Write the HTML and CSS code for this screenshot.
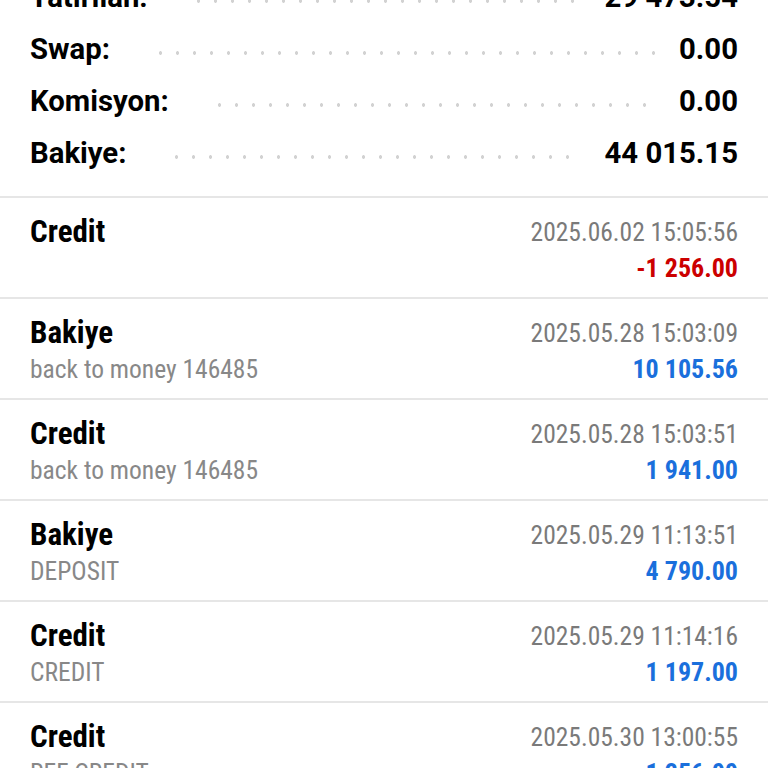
FILE: index.html
```html
<!DOCTYPE html>
<html lang="tr">
<head>
    <meta charset="UTF-8">
    <meta name="viewport" content="width=device-width, initial-scale=1.0">
    <title>Geçmiş</title>
    <link rel="stylesheet" href="styles.css">
</head>
<body>
<div class="history">
    <div class="summary">
        <div class="summary-row"><span class="label">Yatırılan:</span><span class="dots"></span><span class="value">29 473.54</span></div>
        <div class="summary-row"><span class="label">Swap:</span><span class="dots"></span><span class="value">0.00</span></div>
        <div class="summary-row"><span class="label">Komisyon:</span><span class="dots"></span><span class="value">0.00</span></div>
        <div class="summary-row"><span class="label">Bakiye:</span><span class="dots"></span><span class="value">44 015.15</span></div>
    </div>

    <div class="deal-list">
        <div class="deal">
            <div class="deal-type">Credit</div>
            <div class="deal-time">2025.06.02 15:05:56</div>
            <div class="deal-comment"></div>
            <div class="deal-amount loss">-1 256.00</div>
        </div>
        <div class="deal">
            <div class="deal-type">Bakiye</div>
            <div class="deal-time">2025.05.28 15:03:09</div>
            <div class="deal-comment">back to money 146485</div>
            <div class="deal-amount">10 105.56</div>
        </div>
        <div class="deal">
            <div class="deal-type">Credit</div>
            <div class="deal-time">2025.05.28 15:03:51</div>
            <div class="deal-comment">back to money 146485</div>
            <div class="deal-amount">1 941.00</div>
        </div>
        <div class="deal">
            <div class="deal-type">Bakiye</div>
            <div class="deal-time">2025.05.29 11:13:51</div>
            <div class="deal-comment">DEPOSIT</div>
            <div class="deal-amount">4 790.00</div>
        </div>
        <div class="deal">
            <div class="deal-type">Credit</div>
            <div class="deal-time">2025.05.29 11:14:16</div>
            <div class="deal-comment">CREDIT</div>
            <div class="deal-amount">1 197.00</div>
        </div>
        <div class="deal">
            <div class="deal-type">Credit</div>
            <div class="deal-time">2025.05.30 13:00:55</div>
            <div class="deal-comment">REF CREDIT</div>
            <div class="deal-amount">1 256.00</div>
        </div>
    </div>
</div>
</body>
</html>
```

FILE: styles.css
```css
body {
    margin: 0;
    background-color: #ffffff;
    font-family: Roboto, "Noto Sans", sans-serif;
    color: #000000;
    overflow: hidden;
}

.history {
    width: 768px;
}

/* totals block at the top */
.summary {
    margin-top: -29px;
    padding: 0 30px 17px;
    border-bottom: 2px solid #e6e6e6;
}

.summary-row {
    display: flex;
    align-items: center;
    height: 52px;
    font-size: 29.3px;
    font-weight: bold;
    line-height: 52px;
}

.dots {
    flex: 1;
    height: 6px;
    margin: 8px 22px 0 42px;
    background-image: radial-gradient(circle, #d2d2d2 1.5px, transparent 2px);
    background-size: 17px 6px;
    background-repeat: repeat-x;
}

/* deals */
.deal {
    display: grid;
    grid-template-columns: 1fr auto;
    grid-template-rows: 36px 36px;
    padding: 16px 30px 11px;
    border-bottom: 2px solid #e6e6e6;
    font-family: "Roboto Condensed", Roboto, sans-serif;
    font-stretch: 75%;
    line-height: 36px;
}

.deal-type {
    font-size: 31px;
    font-weight: bold;
}

.deal-time {
    font-size: 25.5px;
    color: #7a7a7a;
    text-align: right;
}

.deal-comment {
    font-size: 25.5px;
    color: #888888;
}

.deal-amount {
    font-size: 26px;
    font-weight: bold;
    color: #1a6fdc;
    text-align: right;
}

.deal-amount.loss {
    color: #cc0000;
}
```
